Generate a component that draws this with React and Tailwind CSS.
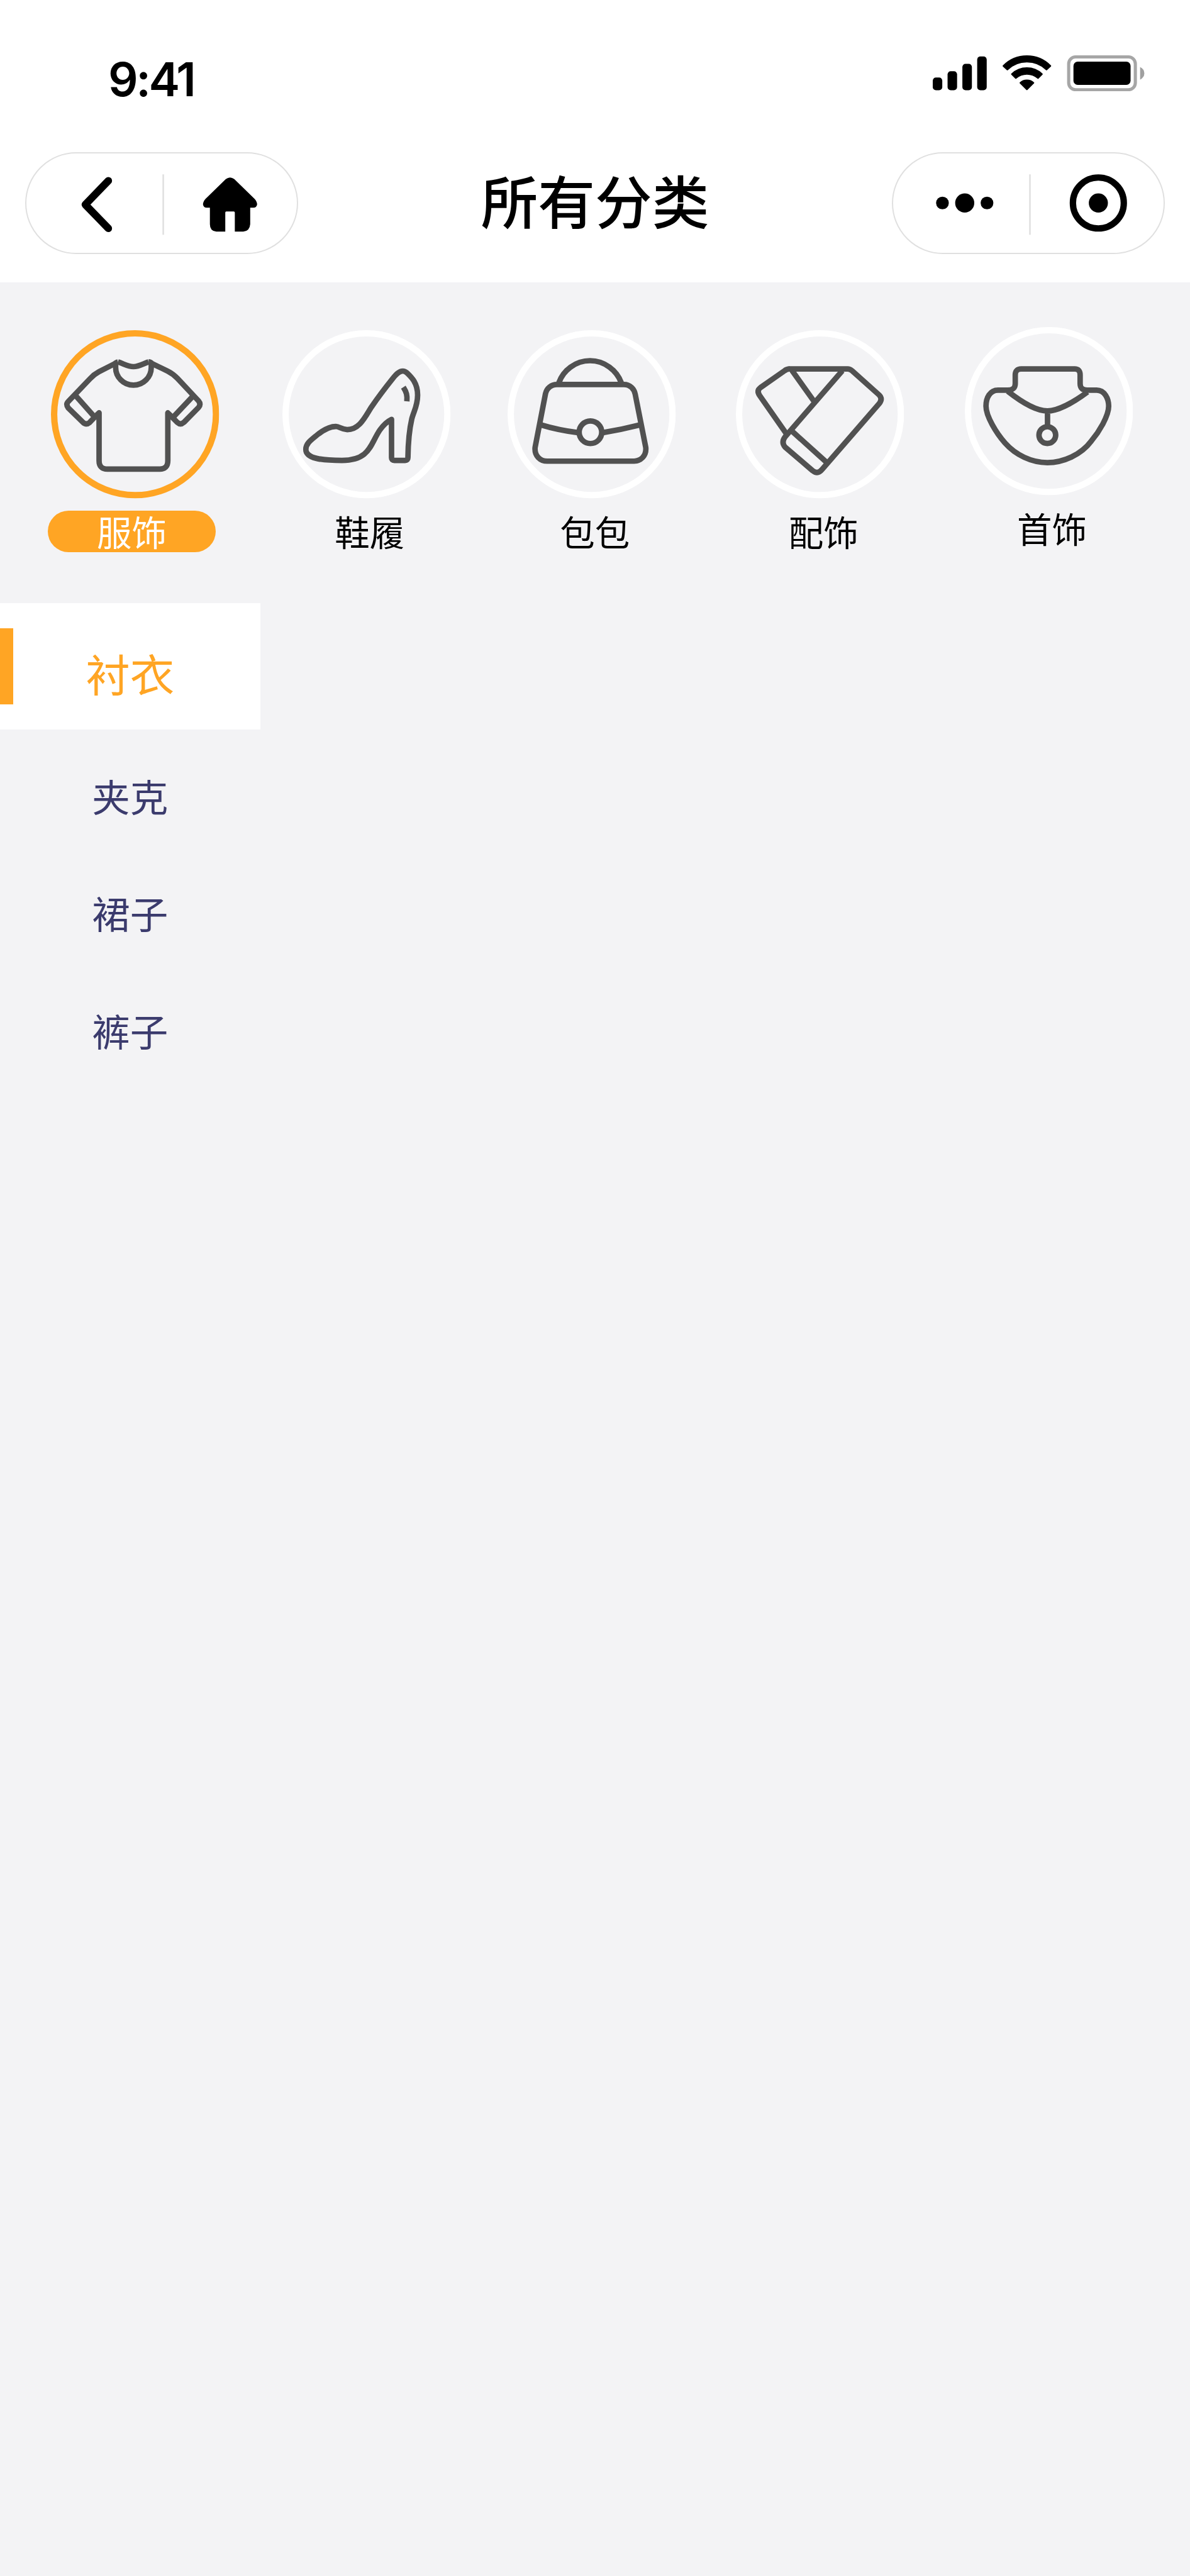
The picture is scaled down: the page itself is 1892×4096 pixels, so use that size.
import React, { useState } from 'react';

const TshirtIcon = () => (
  <>
    <path d="M488 252C520 262 545 279 576 279C607 279 632 262 662 252" />
    <path d="M475 262V283A101 101 0 0 0 677 283V262" />
    <path d="M488 252Q480 254 470 262L380 308Q352 323 330 347L206 477Q191 492 206 513L290 595Q308 612 328 595L365 556L381 541V812Q381 860 428 860H725Q771 860 771 812V541L786 556L824 595Q843 612 862 595L945 511Q961 492 945 473L825 345Q800 319 770 304L682 262Q672 252 662 252" />
    <path d="M245 440L352 560M915 445L805 562" />
  </>
);

const ShoeIcon = () => (
  <>
    <path d="M785 304C765 304 748 320 725 350C685 400 640 460 607 508C572 562 540 636 470 636C437 636 427 619 405 618C362 618 320 648 290 674C258 700 235 718 235 748C235 800 320 811 440 811C600 811 600 718 655 638C680 603 700 588 721 578V795Q721 811 737 811H798Q814 811 814 795C815 715 821 640 836 575C848 530 869 500 869 440C869 370 832 337 808 314Q797 304 785 304Z" />
    <path d="M788 395C806 423 811 442 808 476" />
  </>
);

const BagIcon = () => (
  <>
    <path d="M381 370C405 300 475 245 558 245C640 245 710 300 735 370" strokeLinecap="butt" />
    <path d="M370 380H750C785 380 808 405 814 435L874 738C878 785 845 815 808 815H315C275 815 242 785 246 738L305 433C312 400 338 380 370 380Z" />
    <path d="M275 608Q380 640 495 654M627 654Q740 636 848 608" />
    <circle cx="560" cy="651" r="64" />
  </>
);

const ScarfIcon = () => (
  <>
    <path d="M395 292H730Q743 292 755 302L908 439Q930 460 910 487L585 862Q560 892 530 868L375 735Q352 708 375 677L700 302" />
    <path d="M380 656L231 443Q212 415 235 398L372 302Q385 292 400 292" />
    <path d="M414 300L540 477M418 648L606 818" />
  </>
);

const NecklaceIcon = () => (
  <>
    <path d="M422 292H725Q756 292 756 325V375Q756 412 795 412H850C895 412 918 460 918 503C918 560 862 650 820 700C760 780 660 823 570 823C480 823 390 780 330 712C280 655 222 560 222 503C222 455 245 412 290 412H345Q388 412 388 375V325Q388 292 422 292Z" />
    <path d="M345 418C430 485 510 530 570 530C630 530 720 480 798 422M571 535V615" />
    <circle cx="570" cy="667" r="47.5" />
  </>
);

const categories = [
  { name: '服饰', icon: TshirtIcon, viewBox: '108 72 954 954', spacing: 'ml-[80.7px]', label: '-ml-[5px]' },
  { name: '鞋履', icon: ShoeIcon, viewBox: '102 72 954 954', spacing: 'ml-[100.9px]', label: 'ml-[5px]' },
  { name: '包包', icon: BagIcon, viewBox: '90 72 954 954', spacing: 'ml-[90.8px]', label: 'ml-[5px]' },
  { name: '配饰', icon: ScarfIcon, viewBox: '96 72 954 954', spacing: 'ml-[95.9px]', label: 'ml-[5px]' },
  { name: '首饰', icon: NecklaceIcon, viewBox: '102 54 954 954', spacing: 'ml-[95.9px] -mt-[5px]', label: 'ml-[5px]' },
];

const subCategories = ['衬衣', '夹克', '裙子', '裤子'];

const StatusIcons = () => (
  <svg className="w-[336.4px] h-[57.2px]" viewBox="1764 104 400 68">
    <rect x="1764" y="146" width="18" height="24" rx="6" />
    <rect x="1792" y="134" width="18" height="36" rx="6" />
    <rect x="1820" y="120" width="18" height="50" rx="6" />
    <rect x="1848" y="106" width="18" height="64" rx="6" />
    <path d="M1896.5 123Q1915 104 1942 104Q1969 104 1987.500 123Q1988.500 124 1987.500 125L1980 132Q1979 133 1978 132Q1963 117.500 1942 117.500Q1921 117.500 1906 132Q1905 133 1904 132L1896.500 125Q1895.500 124 1896.500 123Z" />
    <path d="M1912.500 138.500Q1925 126.700 1942 126.700Q1959 126.700 1971.500 138.500Q1972.500 139.500 1971.500 140.500L1964 148Q1963 149 1962 148Q1953 140.500 1942 140.500Q1931 140.500 1922 148Q1921 149 1920 148L1912.500 140.500Q1911.500 139.500 1912.500 138.500Z" />
    <path d="M1928.500 155Q1934 149.700 1942 149.700Q1950 149.700 1955.500 155Q1956.500 156 1955.500 157L1943 169.500Q1942 170.500 1941 169.500L1928.500 157Q1927.500 156 1928.500 155Z" />
    <rect x="2021" y="107" width="126" height="62" rx="13" fill="none" stroke="#a6a6a6" strokeWidth="6" />
    <rect x="2030" y="116" width="108" height="44" rx="8" />
    <path d="M2156 126Q2164 130 2164 138Q2164 146 2156 150Z" fill="#a0a0a0" />
  </svg>
);

const Capsule = ({ children }) => (
  <div className="w-[434px] h-[161.5px] rounded-full border-[2.5px] border-[#e0e0e0] bg-white">
    <svg className="w-full h-full" viewBox="3 3 510 186">
      <path d="M261 42V156" stroke="#e0e0e0" strokeWidth="3" />
      {children}
    </svg>
  </div>
);

const App = () => {
  const [active, setActive] = useState(0);
  const [sub, setSub] = useState(0);

  return (
    <div className="w-[1892px] h-[4096px] overflow-hidden bg-[#f3f3f5] font-['Noto_Sans_CJK_SC',sans-serif]">
      <header className="h-[449px] bg-white">
        {/* Status bar */}
        <div className="h-[242px] pl-[172px] pr-[72.300px] pt-[87.500px] flex items-start justify-between">
          <span className="font-['Inter',sans-serif] font-semibold text-[74.500px] leading-[76px] tracking-[-3.500px]">9:41</span>
          <StatusIcons />
        </div>

        {/* Navigation bar */}
        <div className="px-[40.400px] flex items-center justify-between">
          <Capsule>
            <path d="M157.500 54L114 99L157.500 144" fill="none" stroke="#000" strokeWidth="14" strokeLinecap="round" strokeLinejoin="round" />
            <path d="M379 51Q387 45 395 51L433 88Q438 93 438 99Q437 105 431 105H425V136Q424 149 412 150H396V114Q396 112 394 112H380Q378 112 378 114V150H361Q349 149 349 136V105H343Q337 105 336 99Q336 93 341 88Z" />
          </Capsule>
          <h1 className="text-[90.800px] leading-[120px] font-medium text-black -mt-[12px]">所有分类</h1>
          <Capsule>
            <circle cx="96" cy="96" r="12" />
            <circle cx="138" cy="96" r="18" />
            <circle cx="180" cy="96" r="12" />
            <circle cx="390" cy="96" r="48" fill="none" stroke="#000" strokeWidth="12" />
            <circle cx="390" cy="96" r="18" />
          </Capsule>
        </div>
      </header>

      {/* Top categories */}
      <div className="pt-[75.700px] flex items-start">
        {categories.map((cat, i) => {
          const Icon = cat.icon;
          return (
            <button key={cat.name} onClick={() => setActive(i)} className={`w-[267.400px] shrink-0 ${cat.spacing}`}>
              <svg className="block w-[267.400px] h-[267.400px]" viewBox={cat.viewBox} overflow="visible">
                <svg x={cat.viewBox.split(' ')[0]} y={cat.viewBox.split(' ')[1]} width="954" height="954">
                  <circle cx="477" cy="477" r="459" fill="none" strokeWidth="36" className={active === i ? 'stroke-[#ffa524]' : 'stroke-white'} />
                </svg>
                <g fill="none" stroke="#515151" strokeWidth="31" strokeLinejoin="round">
                  <Icon />
                </g>
              </svg>
              <div className={`mt-[20.200px] w-[267.400px] h-[65.600px] rounded-full text-[55.500px] leading-[65.600px] text-center ${cat.label} ${active === i ? 'bg-[#ffa524] text-white' : 'text-black'}`}>
                {cat.name}
              </div>
            </button>
          );
        })}
      </div>

      {/* Sub categories */}
      <nav className="mt-[80.700px] w-[413.700px]">
        {subCategories.map((name, i) =>
          sub === i ? (
            <div key={name} className="h-[201.800px] mb-[11px] bg-white flex items-center">
              <div className="w-[21px] h-[121px] bg-[#ffa524]" />
              <div className="flex-1 pr-[21px] pt-[20px] text-center text-[70.600px] leading-[84px] text-[#ffa524]">{name}</div>
            </div>
          ) : (
            <div key={name} onClick={() => setSub(i)} className="h-[186.700px] flex items-center justify-center text-[60.500px] leading-[72px] text-[#3b3b6d]">
              {name}
            </div>
          )
        )}
      </nav>
    </div>
  );
};

export default App;
